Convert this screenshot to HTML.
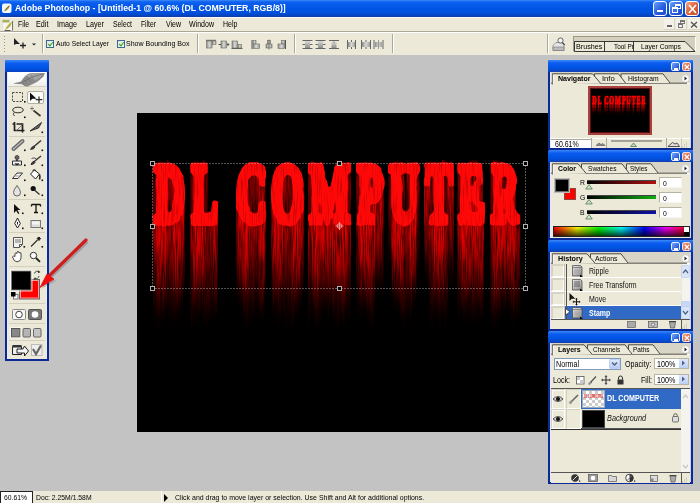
<!DOCTYPE html>
<html><head><meta charset="utf-8">
<style>
*{margin:0;padding:0;box-sizing:border-box}
html,body{width:700px;height:503px;overflow:hidden;background:#c3c3c3;font-family:"Liberation Sans",sans-serif;color:#000}
.a{position:absolute}
.s{position:absolute;white-space:nowrap;transform-origin:0 0;transform:scaleX(.82);font-size:8.5px;line-height:8.5px}
#title{left:0;top:0;width:700px;height:18px;background:linear-gradient(#4a94fa 0,#1a6cf2 1px,#0a5eee 3px,#0055e5 9px,#0050dc 13px,#0046c8 15px,#1a3ca0 17px,#f4f8ff 17px)}
.wb{top:1px;width:14px;height:15px;border:1px solid #fff;border-radius:3px;background:linear-gradient(135deg,#6aa0fa,#2a5ee0 55%,#1a48c8)}
.wb.c{background:linear-gradient(135deg,#f4a888,#dc6038 55%,#c44c24)}
#menu{left:0;top:18px;width:700px;height:13px;background:#ece9d8}
#opt{left:0;top:31px;width:700px;height:24px;background:#ece9d8;border-top:1px solid #aca899;box-shadow:inset 0 1px #fff}
.sep{position:absolute;width:2px;border-left:1px solid #aca899;border-right:1px solid #fff}
.cb{position:absolute;width:8px;height:8px;border:1px solid #3a6a90;background:linear-gradient(135deg,#e0e0d8,#fbfbf8)}
.cb:after{content:"";position:absolute;left:2px;top:0px;width:2px;height:4px;border-right:1.4px solid #20a020;border-bottom:1.4px solid #20a020;transform:rotate(40deg)}
#status{left:0;top:491px;width:700px;height:12px;background:#ece9d8}
#canvas{left:137px;top:113px;width:420px;height:319px;background:#000;overflow:hidden}
</style></head><body>
<!-- TITLE -->
<div id="title" class="a">
  <svg class="a" style="left:1px;top:3px" width="12" height="11"><rect x="1" y=".5" width="9.5" height="9.5" rx="2" fill="#f4f6fa"/><path d="M3 8.5C4 6 6 3.5 9 2C8.5 5 6.5 7.5 3 8.5z" fill="#a89838"/><path d="M4 7.5L8 3" stroke="#6a5a20" stroke-width=".7"/></svg>
  <div class="s" style="left:15px;top:4.4px;color:#fff;font-size:9px;line-height:9px;font-weight:bold;transform:scaleX(.97)">Adobe Photoshop - [Untitled-1 @ 60.6% (DL COMPUTER, RGB/8)]</div>
  <div class="wb a" style="left:653px"><div class="a" style="left:3px;top:8px;width:6px;height:2px;background:#fff"></div></div>
  <div class="wb a" style="left:669px"><div class="a" style="left:5px;top:2px;width:6px;height:5px;border:1px solid #fff;border-top-width:2px"></div><div class="a" style="left:2px;top:5px;width:6px;height:6px;border:1px solid #fff;border-top-width:2px;background:#3a6ae8"></div></div>
  <div class="wb a c" style="left:685px"><svg class="a" style="left:2px;top:2px" width="9" height="10"><path d="M1 1L8 9M8 1L1 9" stroke="#fff" stroke-width="1.6"/></svg></div>
</div>
<!-- MENU -->
<div id="menu" class="a">
  <svg class="a" style="left:2px;top:1px" width="12" height="12"><rect x=".5" y="1" width="10.5" height="10.5" fill="#f6f6f0" stroke="#d8d8d0" stroke-width=".5"/><rect x=".5" y="1" width="7" height="2.5" fill="#a8b060"/><path d="M3 11C4 8 6.5 4.5 10 2.5C9.5 6.5 7 9.5 3 11z" fill="#b8b048"/><path d="M10.5 2v9.5" stroke="#555" stroke-width=".8"/><path d="M2.5 11.5h6" stroke="#333" stroke-width=".8"/></svg>
  <div class="s" style="left:17.5px;top:2px;font-size:9px;line-height:9px;transform:scaleX(.76)">File</div>
  <div class="s" style="left:36px;top:2px;font-size:9px;line-height:9px;transform:scaleX(.8)">Edit</div>
  <div class="s" style="left:57px;top:2px;font-size:9px;line-height:9px;transform:scaleX(.8)">Image</div>
  <div class="s" style="left:85.5px;top:2px;font-size:9px;line-height:9px;transform:scaleX(.8)">Layer</div>
  <div class="s" style="left:112.5px;top:2px;font-size:9px;line-height:9px;transform:scaleX(.76)">Select</div>
  <div class="s" style="left:140.5px;top:2px;font-size:9px;line-height:9px;transform:scaleX(.75)">Filter</div>
  <div class="s" style="left:165.5px;top:2px;font-size:9px;line-height:9px;transform:scaleX(.78)">View</div>
  <div class="s" style="left:188.5px;top:2px;font-size:9px;line-height:9px;transform:scaleX(.78)">Window</div>
  <div class="s" style="left:222.5px;top:2px;font-size:9px;line-height:9px;transform:scaleX(.78)">Help</div>
  <div class="a" style="left:664px;top:1px;width:11px;height:11px;background:#f4f2e8;border-right:1px solid #d8d4c4;border-bottom:1px solid #d8d4c4"><div class="a" style="left:3px;top:6px;width:5px;height:2px;background:#666"></div></div>
  <div class="a" style="left:676px;top:1px;width:11px;height:11px;background:#f4f2e8;border-right:1px solid #d8d4c4;border-bottom:1px solid #d8d4c4"><div class="a" style="left:4px;top:1px;width:5px;height:4px;border:1px solid #777;border-top-width:2px"></div><div class="a" style="left:2px;top:4px;width:5px;height:5px;border:1px solid #777;border-top-width:2px;background:#f4f2e8"></div></div>
  <div class="a" style="left:688px;top:1px;width:12px;height:11px;background:#f4f2e8;border-bottom:1px solid #d8d4c4"><svg class="a" style="left:2px;top:2px" width="8" height="7"><path d="M1 1L7 6.5M7 1L1 6.5" stroke="#555" stroke-width="1.4"/></svg></div>
</div>
<!-- OPTIONS -->
<div id="opt" class="a">
  <div class="a" style="left:4px;top:4px;width:1px;height:17px;background:repeating-linear-gradient(#9c9888 0 1px,transparent 1px 3px)"></div>
  <svg class="a" style="left:13px;top:5px" width="26" height="12">
    <path d="M1 1L1 8L3 7L7 7Z" fill="#222"/>
    <path d="M10 5.5v6M7 8.5h6" stroke="#222" stroke-width="1.3"/>
    <path d="M19 6.5h4l-2 2z" fill="#222"/>
  </svg>
  <div class="sep" style="left:42px;top:2px;height:19px"></div>
  <div class="cb" style="left:46px;top:8px"></div>
  <div class="s" style="left:56px;top:8px;font-size:8px;line-height:8px;transform:scaleX(.84)">Auto Select Layer</div>
  <div class="cb" style="left:117px;top:8px"></div>
  <div class="s" style="left:126px;top:8px;font-size:8px;line-height:8px;transform:scaleX(.88)">Show Bounding Box</div>
  <div class="sep" style="left:197px;top:2px;height:19px"></div>
  <div class="sep" style="left:294px;top:2px;height:19px"></div>
  <div class="sep" style="left:392px;top:2px;height:19px"></div>
  <div class="sep" style="left:547px;top:2px;height:19px"></div>
  <svg class="a" style="left:0;top:-31px" width="700" height="60">
    <defs>
      <linearGradient id="gb" x1="0" y1="0" x2="1" y2="0"><stop offset="0" stop-color="#8c8c88"/><stop offset=".5" stop-color="#d8d8d4"/><stop offset="1" stop-color="#9c9c98"/></linearGradient>
      <linearGradient id="gv" x1="0" y1="0" x2="0" y2="1"><stop offset="0" stop-color="#d8d8d4"/><stop offset="1" stop-color="#8c8c88"/></linearGradient>
    </defs>
    <g stroke="#6a6a66" stroke-width=".6">
      <!-- group1 -->
      <rect x="206.5" y="40" width="5.5" height="7" fill="url(#gb)"/><rect x="212.5" y="40" width="3.5" height="3.5" fill="url(#gb)"/><path d="M206 39.3h10" stroke="#555" stroke-width=".9"/>
      <rect x="221" y="40" width="5.5" height="7" fill="url(#gb)"/><path d="M218.5 43.5h2.5M227 43.5h2" stroke="#555" stroke-width="1"/><path d="M227.5 42l1.8 1.5-1.8 1.5" fill="#555"/>
      <rect x="232" y="40" width="5.5" height="7" fill="url(#gb)"/><rect x="238" y="43.5" width="3.5" height="3.5" fill="url(#gb)"/><path d="M231.5 47.5h11" stroke="#555" stroke-width=".9"/>
      <!-- group2 -->
      <path d="M252 39v9" stroke="#555" stroke-width="1"/><rect x="253" y="39.5" width="3" height="3.5" fill="url(#gb)"/><rect x="253" y="43" width="6.5" height="4.5" fill="url(#gb)"/>
      <rect x="267.5" y="39.5" width="3" height="3" fill="url(#gb)"/><rect x="266" y="43" width="6" height="4" fill="url(#gb)"/><path d="M269 38.5v10" stroke="#555" stroke-width=".7"/>
      <path d="M285.5 39v9" stroke="#555" stroke-width="1"/><rect x="281.5" y="39.5" width="3" height="3.5" fill="url(#gb)"/><rect x="278" y="43" width="6.5" height="4.5" fill="url(#gb)"/>
      <!-- group3 -->
      <path d="M302.5 39.5h10M302.5 43.5h10M302.5 47.5h10" stroke="#666" stroke-width="1"/><rect x="305" y="40" width="5" height="7" fill="url(#gv)" stroke="none"/>
      <path d="M315.5 39.5h10M315.5 43.5h10M315.5 47.5h10" stroke="#666" stroke-width="1"/><rect x="318" y="40" width="5" height="7" fill="url(#gv)" stroke="none"/>
      <path d="M329 39.5h10M329 47.5h10" stroke="#666" stroke-width="1"/><rect x="331.5" y="41" width="5" height="6" fill="url(#gv)" stroke="none"/><path d="M334 39v3" stroke="#666"/>
      <!-- group4 -->
      <path d="M347.5 39v9M351.5 39v9M355.5 39v9" stroke="#666" stroke-width="1"/><rect x="348" y="41" width="7" height="5" fill="url(#gb)" stroke="none"/>
      <path d="M361.5 39v9M366 39v9M370.5 39v9" stroke="#666" stroke-width="1"/><rect x="362" y="41" width="8" height="5" fill="url(#gb)" stroke="none"/>
      <path d="M374 39v9M383 39v9" stroke="#666" stroke-width="1"/><rect x="375" y="41" width="7" height="5" fill="url(#gb)" stroke="none"/><path d="M378.5 39v9" stroke="#666"/>
      <!-- file browser -->
      <path d="M553 44.5l3-3h6l2 2.5v5.5h-11z" fill="#e4e4e4" stroke="#777" stroke-width=".7"/><path d="M553 46h11v3.5h-11z" fill="#bbb" stroke="#777" stroke-width=".6"/>
      <circle cx="560.5" cy="39.5" r="2.6" fill="#f4f4f4" stroke="#555" stroke-width=".9"/><path d="M562.3 41.5l2.5 2.5" stroke="#555" stroke-width="1.3"/>
    </g>
  </svg>
  <!-- palette well -->
  <div class="a" style="left:573px;top:4px;width:123px;height:16px;background:#d4d0c0;border:1px solid #888;border-top-color:#9c9888;border-left-color:#9c9888;border-right-color:#fff;border-bottom-color:#fff"></div>
  <svg class="a" style="left:573px;top:9px" width="124" height="12">
    <path d="M1.5 .5V10.5H122L112 .5z" fill="#ece9d8" stroke="#222" stroke-width=".9"/>
    <path d="M31.5 .5V10.5M60.5 .5V10.5" stroke="#222" stroke-width=".9"/>
  </svg>
  <div class="s" style="left:575.5px;top:10.5px;font-size:8px;line-height:8px;transform:scaleX(.9)">Brushes</div>
  <div class="s" style="left:613.5px;top:10.5px;font-size:8px;line-height:8px;transform:scaleX(.8)">Tool Pr</div>
  <div class="s" style="left:641px;top:10.5px;font-size:8px;line-height:8px;transform:scaleX(.84)">Layer Comps</div>
</div>
<div id="canvas" class="a">
<svg class="a" style="left:0;top:0" width="420" height="319">
  <defs>
    <filter id="smear" filterUnits="userSpaceOnUse" x="137" y="158" width="420" height="182" color-interpolation-filters="sRGB">
      <feTurbulence type="fractalNoise" baseFrequency="0.2 0.004" numOctaves="2" seed="3" result="n1"/>
      <feColorMatrix in="n1" type="matrix" values="0 0 0 0 0.5  1 0 0 0 0  0 0 0 0 0  0 0 0 0 1" result="map"/>
      <feGaussianBlur in="SourceGraphic" stdDeviation="0.6 3" result="sg"/>
      <feDisplacementMap in="sg" in2="map" scale="36" xChannelSelector="R" yChannelSelector="G" result="disp"/>
      <feTurbulence type="fractalNoise" baseFrequency="0.9 0.035" numOctaves="2" seed="9" result="n2"/>
      <feColorMatrix in="n2" type="matrix" values="0 0 0 0 0  0 0 0 0 0  0 0 0 0 0  1.7 0 0 0 -0.05" result="na"/>
      <feComposite in="disp" in2="na" operator="in"/>
    </filter>
    <clipPath id="below"><rect x="137" y="160" width="420" height="184"/></clipPath>
    <filter id="rough" x="-5%" y="-5%" width="110%" height="110%" color-interpolation-filters="sRGB">
      <feTurbulence type="fractalNoise" baseFrequency="0.5 0.06" numOctaves="1" seed="2" result="t"/>
      <feDisplacementMap in="SourceGraphic" in2="t" scale="3.5" xChannelSelector="R" yChannelSelector="G" result="d0"/>
      <feGaussianBlur in="d0" stdDeviation="1.3" result="d1"/>
      <feComponentTransfer in="d1" result="d"><feFuncA type="linear" slope="3.5" intercept="-1.1"/></feComponentTransfer>
      <feTurbulence type="fractalNoise" baseFrequency="0.9 0.04" numOctaves="2" seed="5" result="t2"/>
      <feColorMatrix in="t2" type="matrix" values="0 0 0 0 0  0 0 0 0 0  0 0 0 0 0  1.5 0 0 0 -0.78" result="dk"/>
      <feFlood flood-color="#600000" flood-opacity=".8" result="fl"/>
      <feComposite in="fl" in2="dk" operator="in" result="fl2"/>
      <feComposite in="fl2" in2="d" operator="in" result="fl3"/>
      <feMerge><feMergeNode in="d"/><feMergeNode in="fl3"/></feMerge>
    </filter>
    <g id="txt" font-family="Liberation Serif" font-weight="bold" font-size="100">
      <text transform="translate(154.56 221.1) scale(0.4185 0.8185)" vector-effect="non-scaling-stroke">D</text>
      <text transform="translate(191.63 221.1) scale(0.3867 0.8185)" vector-effect="non-scaling-stroke">L</text>
      <text transform="translate(236.30 221.1) scale(0.4200 0.8185)" vector-effect="non-scaling-stroke">C</text>
      <text transform="translate(271.29 221.1) scale(0.4221 0.8185)" vector-effect="non-scaling-stroke">O</text>
      <text transform="translate(309.54 221.1) scale(0.4292 0.8185)" vector-effect="non-scaling-stroke">M</text>
      <text transform="translate(357.57 221.1) scale(0.4143 0.8185)" vector-effect="non-scaling-stroke">P</text>
      <text transform="translate(389.60 221.1) scale(0.4000 0.8185)" vector-effect="non-scaling-stroke">U</text>
      <text transform="translate(425.60 221.1) scale(0.4000 0.8185)" vector-effect="non-scaling-stroke">T</text>
      <text transform="translate(458.64 221.1) scale(0.3783 0.8185)" vector-effect="non-scaling-stroke">E</text>
      <text transform="translate(491.68 221.1) scale(0.3620 0.8185)" vector-effect="non-scaling-stroke">R</text>
    </g>
  </defs>
  <g transform="translate(-137 -113)">
    <g clip-path="url(#below)"><g filter="url(#smear)"><g fill="#f00000" stroke="#f00000" stroke-width="6.8"><use href="#txt" y="5" opacity="0.328"/><use href="#txt" y="10" opacity="0.307"/><use href="#txt" y="15" opacity="0.286"/><use href="#txt" y="20" opacity="0.266"/><use href="#txt" y="25" opacity="0.246"/><use href="#txt" y="30" opacity="0.226"/><use href="#txt" y="35" opacity="0.207"/><use href="#txt" y="40" opacity="0.188"/><use href="#txt" y="45" opacity="0.169"/><use href="#txt" y="50" opacity="0.151"/><use href="#txt" y="55" opacity="0.133"/><use href="#txt" y="60" opacity="0.116"/><use href="#txt" y="65" opacity="0.100"/><use href="#txt" y="70" opacity="0.084"/><use href="#txt" y="75" opacity="0.069"/><use href="#txt" y="80" opacity="0.054"/><use href="#txt" y="85" opacity="0.041"/><use href="#txt" y="90" opacity="0.028"/><use href="#txt" y="95" opacity="0.016"/><use href="#txt" y="100" opacity="0.007"/></g></g></g>
    <g filter="url(#rough)" fill="#ff0808" stroke="#ff0808" stroke-width="6.8"><use href="#txt"/></g>
    <g fill="none" stroke="#b8b8b8" stroke-width=".9" stroke-dasharray="1 2">
      <rect x="152.5" y="163.5" width="373" height="125"/>
    </g>
    <g fill="#000" stroke="#b0b0b0" stroke-width="1">
      <rect x="150.5" y="161.5" width="4" height="4"/><rect x="337.5" y="161.5" width="4" height="4"/><rect x="523.5" y="161.5" width="4" height="4"/>
      <rect x="150.5" y="224.5" width="4" height="4"/><rect x="523.5" y="224.5" width="4" height="4"/>
      <rect x="150.5" y="286.5" width="4" height="4"/><rect x="337.5" y="286.5" width="4" height="4"/><rect x="523.5" y="286.5" width="4" height="4"/>
    </g>
    <g stroke="#f4b0b0" fill="none" stroke-width=".8"><circle cx="339.5" cy="226" r="2.3"/><path d="M335.5 226h8M339.5 222v8"/></g>
  </g>
</svg>
</div>
<!-- PANELS -->
<div class="a" style="left:548px;top:60px;width:145px;height:90px;background:#0b2a96;border-radius:2px 2px 0 0"></div>
<div class="a" style="left:548px;top:60px;width:145px;height:12px;background:linear-gradient(#3c8af6,#0c5cf0 25%,#0054e4 60%,#0848c8 90%,#1a3ca8);border-radius:2px 2px 0 0"></div>
<div class="a" style="left:550px;top:72px;width:141px;height:76px;background:#ece9d8;border-left:1px solid #e4eaf8;border-right:1px solid #c8d4f0"></div>
<div class="a" style="left:671px;top:62px;width:9px;height:9px;border:1px solid #e8f0ff;border-radius:2px;background:linear-gradient(135deg,#78a8f8,#3868e0 60%,#2452c8)"><div class="a" style="left:2px;top:5px;width:4px;height:1.5px;background:#fff"></div></div>
<div class="a" style="left:682px;top:62px;width:9px;height:9px;border:1px solid #f4e0d8;border-radius:2px;background:linear-gradient(135deg,#f0a888,#d86a48 60%,#c45838)"><svg class="a" style="left:1px;top:1px" width="6" height="6"><path d="M.8 .8L5.2 5.2M5.2 .8L.8 5.2" stroke="#fff" stroke-width="1.3"/></svg></div>
<div class="a" style="left:551px;top:72px;width:139px;height:11.5px;background:#d8d5c6;border-bottom:1px solid #fff"></div>
<svg class="a" style="left:681px;top:73.5px" width="9" height="9"><circle cx="4.5" cy="4.5" r="3.8" fill="#fbfbf8" stroke="#c8c8c0" stroke-width=".6"/><path d="M3.5 2.5L6 4.5L3.5 6.5z" fill="#223"/></svg>
<svg class="a" style="left:548px;top:72px;overflow:visible" width="145" height="13">
<path d="M3 11.2H139" stroke="#4c4a40" stroke-width="1"/>
<path d="M73.0 11V1.8H115L122 11" fill="#ece9d8" stroke="#3c3c34" stroke-width=".9"/>
<path d="M46.5 11V1.8H70.5L77.5 11" fill="#ece9d8" stroke="#3c3c34" stroke-width=".9"/>
<path d="M4.5 12.5V1.8H44.5L52.5 11.2" fill="#ece9d8" stroke="#3c3c34" stroke-width=".9"/>
<path d="M5 11.5H52.0V13H5z" fill="#ece9d8"/>
<path d="M5.2 2.5V12.5" stroke="#fff" stroke-width=".8"/>
</svg>
<div class="s" style="left:557.5px;top:74.8px;font-size:8px;line-height:8px;transform:scaleX(0.88);color:#000;font-weight:bold;">Navigator</div>
<div class="s" style="left:602px;top:74.8px;font-size:8px;line-height:8px;transform:scaleX(0.95);color:#000;">Info</div>
<div class="s" style="left:628px;top:74.8px;font-size:8px;line-height:8px;transform:scaleX(0.84);color:#000;">Histogram</div>
<div class="a" style="left:588px;top:86px;width:64px;height:48.5px;background:#000;border:2px solid #a8403c;box-shadow:inset 0 0 0 1px #5a1010"></div>
<svg class="a" style="left:590px;top:88px" width="60" height="45"><g transform="translate(-20.46 -16.5) scale(.1458)"><g clip-path="url(#below)"><g fill="#e00" stroke="#e00" stroke-width=".5"><use href="#txt" y="10" opacity="0.422"/><use href="#txt" y="20" opacity="0.347"/><use href="#txt" y="30" opacity="0.278"/><use href="#txt" y="40" opacity="0.213"/><use href="#txt" y="50" opacity="0.154"/><use href="#txt" y="60" opacity="0.102"/><use href="#txt" y="70" opacity="0.056"/><use href="#txt" y="80" opacity="0.021"/></g></g><g fill="#f00" stroke="#f00" stroke-width=".5"><use href="#txt"/></g></g></svg>
<div class="a" style="left:551px;top:138px;width:139px;height:10px;background:#ece9d8;border-top:1px solid #fff"></div>
<div class="a" style="left:551px;top:138.5px;width:40px;height:9.5px;background:#fff;border-top:1px solid #aca899"></div>
<div class="s" style="left:555px;top:139.6px;font-size:8.5px;line-height:8.5px;transform:scaleX(0.82);color:#000;">60.61%</div>
<div class="a" style="left:591px;top:138px;width:1px;height:10px;background:#aca899"></div>
<div class="a" style="left:606px;top:138px;width:1px;height:10px;background:#aca899"></div>
<div class="a" style="left:666px;top:138px;width:1px;height:10px;background:#aca899"></div>
<div class="a" style="left:681px;top:138px;width:1px;height:10px;background:#d0ccbc"></div>
<svg class="a" style="left:594px;top:139px" width="96" height="9"><path d="M2 6.5l3-2.5 2 1.5 2-1 2 2z" fill="#888" stroke="#555" stroke-width=".6"/><path d="M17 2h51" stroke="#8c8c80" stroke-width="1.4"/><path d="M39.5 4l-3 3.5h6z" fill="#b8dcb0" stroke="#5a7a5a" stroke-width=".8"/><path d="M74 7.5l4.5-4 2.5 1.5 2-1 2.5 3.5z" fill="#ddd" stroke="#444" stroke-width=".9"/><path d="M88 8h1M90 6h1M90 8h1M92 4h1M92 6h1M92 8h1" stroke="#b8b4a4"/></svg>
<div class="a" style="left:548px;top:150px;width:145px;height:90px;background:#0b2a96;border-radius:2px 2px 0 0"></div>
<div class="a" style="left:548px;top:150px;width:145px;height:12px;background:linear-gradient(#3c8af6,#0c5cf0 25%,#0054e4 60%,#0848c8 90%,#1a3ca8);border-radius:2px 2px 0 0"></div>
<div class="a" style="left:550px;top:162px;width:141px;height:76px;background:#ece9d8;border-left:1px solid #e4eaf8;border-right:1px solid #c8d4f0"></div>
<div class="a" style="left:671px;top:152px;width:9px;height:9px;border:1px solid #e8f0ff;border-radius:2px;background:linear-gradient(135deg,#78a8f8,#3868e0 60%,#2452c8)"><div class="a" style="left:2px;top:5px;width:4px;height:1.5px;background:#fff"></div></div>
<div class="a" style="left:682px;top:152px;width:9px;height:9px;border:1px solid #f4e0d8;border-radius:2px;background:linear-gradient(135deg,#f0a888,#d86a48 60%,#c45838)"><svg class="a" style="left:1px;top:1px" width="6" height="6"><path d="M.8 .8L5.2 5.2M5.2 .8L.8 5.2" stroke="#fff" stroke-width="1.3"/></svg></div>
<div class="a" style="left:551px;top:162px;width:139px;height:11.5px;background:#d8d5c6;border-bottom:1px solid #fff"></div>
<svg class="a" style="left:681px;top:163.5px" width="9" height="9"><circle cx="4.5" cy="4.5" r="3.8" fill="#fbfbf8" stroke="#c8c8c0" stroke-width=".6"/><path d="M3.5 2.5L6 4.5L3.5 6.5z" fill="#223"/></svg>
<svg class="a" style="left:548px;top:162px;overflow:visible" width="145" height="13">
<path d="M3 11.2H139" stroke="#4c4a40" stroke-width="1"/>
<path d="M78.5 11V1.8H103L110 11" fill="#ece9d8" stroke="#3c3c34" stroke-width=".9"/>
<path d="M33.5 11V1.8H74L81 11" fill="#ece9d8" stroke="#3c3c34" stroke-width=".9"/>
<path d="M4.5 12.5V1.8H30L38 11.2" fill="#ece9d8" stroke="#3c3c34" stroke-width=".9"/>
<path d="M5 11.5H37.5V13H5z" fill="#ece9d8"/>
<path d="M5.2 2.5V12.5" stroke="#fff" stroke-width=".8"/>
</svg>
<div class="s" style="left:557.5px;top:164.8px;font-size:8px;line-height:8px;transform:scaleX(0.86);color:#000;font-weight:bold;">Color</div>
<div class="s" style="left:587.5px;top:164.8px;font-size:8px;line-height:8px;transform:scaleX(0.82);color:#000;">Swatches</div>
<div class="s" style="left:629.5px;top:164.8px;font-size:8px;line-height:8px;transform:scaleX(0.8);color:#000;">Styles</div>
<div class="a" style="left:555px;top:179px;width:13.5px;height:13px;background:#000;border:1px solid #777;box-shadow:0 0 0 1px #999"></div>
<div class="a" style="left:564px;top:187.5px;width:12px;height:12px;background:#f00;border:1px solid #8a4a40"></div>
<div class="a" style="left:555px;top:179px;width:13.5px;height:13px;background:#000;border:1px solid #6a6a6a;box-shadow:0 0 0 1px #bbb"></div>
<div class="s" style="left:579.5px;top:179px;font-size:7.6px;line-height:7.6px;transform:scaleX(0.9);color:#000;">R</div>
<div class="a" style="left:587px;top:180px;width:69px;height:4px;background:linear-gradient(90deg,#000,#b01010);border-top:1px solid #444"></div>
<svg class="a" style="left:585px;top:184px" width="8" height="6"><path d="M4 .5L7.3 5H.7z" fill="#c8e4c0" stroke="#587858" stroke-width=".8"/></svg>
<div class="a" style="left:659px;top:177px;width:22.5px;height:10.5px;background:#fff;border:1px solid #b8b4a4;border-right-color:#f4f4f0;border-bottom-color:#f4f4f0"></div>
<div class="s" style="left:662.5px;top:180px;font-size:8px;line-height:8px;transform:scaleX(0.85);color:#000;">0</div>
<div class="s" style="left:579.5px;top:194px;font-size:7.6px;line-height:7.6px;transform:scaleX(0.9);color:#000;">G</div>
<div class="a" style="left:587px;top:195px;width:69px;height:4px;background:linear-gradient(90deg,#000,#10b010);border-top:1px solid #444"></div>
<svg class="a" style="left:585px;top:199px" width="8" height="6"><path d="M4 .5L7.3 5H.7z" fill="#c8e4c0" stroke="#587858" stroke-width=".8"/></svg>
<div class="a" style="left:659px;top:192px;width:22.5px;height:10.5px;background:#fff;border:1px solid #b8b4a4;border-right-color:#f4f4f0;border-bottom-color:#f4f4f0"></div>
<div class="s" style="left:662.5px;top:195px;font-size:8px;line-height:8px;transform:scaleX(0.85);color:#000;">0</div>
<div class="s" style="left:579.5px;top:209px;font-size:7.6px;line-height:7.6px;transform:scaleX(0.9);color:#000;">B</div>
<div class="a" style="left:587px;top:210px;width:69px;height:4px;background:linear-gradient(90deg,#000,#1010a8);border-top:1px solid #444"></div>
<svg class="a" style="left:585px;top:214px" width="8" height="6"><path d="M4 .5L7.3 5H.7z" fill="#c8e4c0" stroke="#587858" stroke-width=".8"/></svg>
<div class="a" style="left:659px;top:207px;width:22.5px;height:10.5px;background:#fff;border:1px solid #b8b4a4;border-right-color:#f4f4f0;border-bottom-color:#f4f4f0"></div>
<div class="s" style="left:662.5px;top:210px;font-size:8px;line-height:8px;transform:scaleX(0.85);color:#000;">0</div>
<div class="a" style="left:553px;top:225.5px;width:137px;height:11.5px;background:linear-gradient(90deg,#ff0000 0%,#ffff00 17%,#00ff00 33%,#00ffff 50%,#0000ff 67%,#ff00ff 83%,#ff0000 100%);border:1px solid #222"></div>
<div class="a" style="left:553px;top:225.5px;width:137px;height:11.5px;background:linear-gradient(rgba(255,255,255,0),rgba(0,0,0,.75));border:1px solid #222"></div>
<div class="a" style="left:683.5px;top:226.5px;width:5.5px;height:5px;background:#fff"></div>
<div class="a" style="left:683.5px;top:231.5px;width:5.5px;height:4.5px;background:#000"></div>
<div class="a" style="left:548px;top:240px;width:145px;height:91px;background:#0b2a96;border-radius:2px 2px 0 0"></div>
<div class="a" style="left:548px;top:240px;width:145px;height:12px;background:linear-gradient(#3c8af6,#0c5cf0 25%,#0054e4 60%,#0848c8 90%,#1a3ca8);border-radius:2px 2px 0 0"></div>
<div class="a" style="left:550px;top:252px;width:141px;height:77px;background:#ece9d8;border-left:1px solid #e4eaf8;border-right:1px solid #c8d4f0"></div>
<div class="a" style="left:671px;top:242px;width:9px;height:9px;border:1px solid #e8f0ff;border-radius:2px;background:linear-gradient(135deg,#78a8f8,#3868e0 60%,#2452c8)"><div class="a" style="left:2px;top:5px;width:4px;height:1.5px;background:#fff"></div></div>
<div class="a" style="left:682px;top:242px;width:9px;height:9px;border:1px solid #f4e0d8;border-radius:2px;background:linear-gradient(135deg,#f0a888,#d86a48 60%,#c45838)"><svg class="a" style="left:1px;top:1px" width="6" height="6"><path d="M.8 .8L5.2 5.2M5.2 .8L.8 5.2" stroke="#fff" stroke-width="1.3"/></svg></div>
<div class="a" style="left:551px;top:252px;width:139px;height:11.5px;background:#d8d5c6;border-bottom:1px solid #fff"></div>
<svg class="a" style="left:681px;top:253.5px" width="9" height="9"><circle cx="4.5" cy="4.5" r="3.8" fill="#fbfbf8" stroke="#c8c8c0" stroke-width=".6"/><path d="M3.5 2.5L6 4.5L3.5 6.5z" fill="#223"/></svg>
<svg class="a" style="left:548px;top:252px;overflow:visible" width="145" height="13">
<path d="M3 11.2H139" stroke="#4c4a40" stroke-width="1"/>
<path d="M42.5 11V1.8H73L80 11" fill="#ece9d8" stroke="#3c3c34" stroke-width=".9"/>
<path d="M4.5 12.5V1.8H39L47 11.2" fill="#ece9d8" stroke="#3c3c34" stroke-width=".9"/>
<path d="M5 11.5H46.5V13H5z" fill="#ece9d8"/>
<path d="M5.2 2.5V12.5" stroke="#fff" stroke-width=".8"/>
</svg>
<div class="s" style="left:557.5px;top:254.8px;font-size:8px;line-height:8px;transform:scaleX(0.9);color:#000;font-weight:bold;">History</div>
<div class="s" style="left:594.5px;top:254.8px;font-size:8px;line-height:8px;transform:scaleX(0.86);color:#000;">Actions</div>
<div class="a" style="left:551px;top:264px;width:130px;height:55px;background:#ece9d8"></div>
<div class="a" style="left:551px;top:264px;width:14px;height:14px;background:#ece9d8;border-right:1px solid #c8c4b4;border-bottom:1px solid #fff;box-shadow:inset 1px 1px #d8d4c4"></div>
<div class="a" style="left:552px;top:265px;width:12px;height:12px;border:1px solid #d6d2c2;border-right-color:#fbfbf8;border-bottom-color:#fbfbf8"></div>
<div class="a" style="left:565px;top:277px;width:116px;height:1px;background:#fff"></div>
<div class="s" style="left:588.5px;top:266.5px;font-size:8.5px;line-height:8.5px;transform:scaleX(0.82);color:#111;">Ripple</div>
<div class="a" style="left:551px;top:278px;width:14px;height:14px;background:#ece9d8;border-right:1px solid #c8c4b4;border-bottom:1px solid #fff;box-shadow:inset 1px 1px #d8d4c4"></div>
<div class="a" style="left:552px;top:279px;width:12px;height:12px;border:1px solid #d6d2c2;border-right-color:#fbfbf8;border-bottom-color:#fbfbf8"></div>
<div class="a" style="left:565px;top:291px;width:116px;height:1px;background:#fff"></div>
<div class="s" style="left:588.5px;top:280.5px;font-size:8.5px;line-height:8.5px;transform:scaleX(0.82);color:#111;">Free Transform</div>
<div class="a" style="left:551px;top:292px;width:14px;height:14px;background:#ece9d8;border-right:1px solid #c8c4b4;border-bottom:1px solid #fff;box-shadow:inset 1px 1px #d8d4c4"></div>
<div class="a" style="left:552px;top:293px;width:12px;height:12px;border:1px solid #d6d2c2;border-right-color:#fbfbf8;border-bottom-color:#fbfbf8"></div>
<div class="a" style="left:565px;top:305px;width:116px;height:1px;background:#fff"></div>
<div class="s" style="left:588.5px;top:294.5px;font-size:8.5px;line-height:8.5px;transform:scaleX(0.82);color:#111;">Move</div>
<div class="a" style="left:551px;top:306px;width:14px;height:14px;background:#ece9d8;border-right:1px solid #c8c4b4;border-bottom:1px solid #fff;box-shadow:inset 1px 1px #d8d4c4"></div>
<div class="a" style="left:552px;top:307px;width:12px;height:12px;border:1px solid #d6d2c2;border-right-color:#fbfbf8;border-bottom-color:#fbfbf8"></div>
<div class="a" style="left:565px;top:306px;width:116px;height:13.5px;background:#316ac5"></div>
<div class="s" style="left:588.5px;top:308.5px;font-size:8.5px;line-height:8.5px;transform:scaleX(0.82);color:#fff;font-weight:bold;">Stamp</div>
<div class="a" style="left:565.5px;top:264px;width:1px;height:55px;background:#555"></div>
<svg class="a" style="left:548px;top:264px" width="40" height="56">
<defs><linearGradient id="hg" x1="0" y1="0" x2="1" y2="1"><stop offset="0" stop-color="#e8e8e8"/><stop offset="1" stop-color="#8a8a8a"/></linearGradient></defs>
<g stroke="#444" stroke-width=".7">
<path d="M24.5 1.5h8l1.5 1.5v9h-9.5z" fill="url(#hg)"/><path d="M24.5 3.5h9.5" stroke="#666"/><path d="M26 6h6M26 8h6" stroke="#999"/>
<path d="M24.5 15.5h8l1.5 1.5v9h-9.5z" fill="url(#hg)"/><path d="M26 18h6M26 20h6M26 22h6" stroke="#555" stroke-width=".9"/>
<path d="M24.5 43.5h8l1.5 1.5v9h-9.5z" fill="url(#hg)"/><path d="M24.5 45.5h9.5" stroke="#666"/><path d="M26 48h6M26 50h6" stroke="#999"/>
</g>
<path d="M32 10.5l3 2.5h-3z M32 24.5l3 2.5h-3z M32 52.5l3 2.5h-3z" fill="#000"/>
<path d="M21.5 29v8l2.2-2.2h3.6z" fill="#111"/><path d="M28.5 34.5v6.5M25.2 37.8h6.6" stroke="#111" stroke-width="1"/><path d="M27.6 35.3l.9-1.2.9 1.2M27.6 40.2l.9 1.2.9-1.2M26 36.9l-1.2.9 1.2.9M31 36.9l1.2.9-1.2.9" stroke="#111" stroke-width=".7" fill="none"/>
<path d="M17.5 44.5l4.5 3.3-4.5 3.3z" fill="#fff" stroke="#333" stroke-width=".8"/>
</svg>
<div class="a" style="left:681px;top:264px;width:9px;height:55px;background:#f4f3ee;border-left:1px solid #e8e8e0"></div>
<svg class="a" style="left:681px;top:265px" width="9" height="54"><rect x=".5" y=".5" width="8" height="12" rx="1" fill="#d8e4f8" stroke="#b8c8e8" stroke-width=".6"/><path d="M2 8l2.5-3 2.5 3" stroke="#4d6185" stroke-width="1.2" fill="none"/><rect x=".5" y="36.5" width="8" height="5" rx="1" fill="#c8d8f4" stroke="#b0c4ec" stroke-width=".6"/><rect x=".5" y="41.5" width="8" height="12" rx="1" fill="#d8e4f8" stroke="#b8c8e8" stroke-width=".6"/><path d="M2 46l2.5 3 2.5-3" stroke="#4d6185" stroke-width="1.2" fill="none"/></svg>
<div class="a" style="left:551px;top:319px;width:139px;height:10px;background:#ece9d8;border-top:1px solid #555"></div>
<svg class="a" style="left:620px;top:320px" width="70" height="9"><rect x="7.5" y="1.5" width="8" height="6" fill="#aaa" stroke="#666" stroke-width=".7"/><rect x="28.5" y="1.5" width="9" height="6" fill="#bbb" stroke="#555" stroke-width=".7"/><circle cx="33" cy="4.5" r="1.6" fill="#eee" stroke="#444" stroke-width=".6"/><path d="M49.5 2h6l-1 6h-4z" fill="#aaa" stroke="#555" stroke-width=".7"/><path d="M49 1.5h7" stroke="#444"/><path d="M62 8h1M64 6h1M64 8h1M66 4h1M66 6h1M66 8h1" stroke="#b8b4a4"/></svg>
<div class="a" style="left:548px;top:331px;width:145px;height:153px;background:#0b2a96;border-radius:2px 2px 0 0"></div>
<div class="a" style="left:548px;top:331px;width:145px;height:12px;background:linear-gradient(#3c8af6,#0c5cf0 25%,#0054e4 60%,#0848c8 90%,#1a3ca8);border-radius:2px 2px 0 0"></div>
<div class="a" style="left:550px;top:343px;width:141px;height:139px;background:#ece9d8;border-left:1px solid #e4eaf8;border-right:1px solid #c8d4f0"></div>
<div class="a" style="left:671px;top:333px;width:9px;height:9px;border:1px solid #e8f0ff;border-radius:2px;background:linear-gradient(135deg,#78a8f8,#3868e0 60%,#2452c8)"><div class="a" style="left:2px;top:5px;width:4px;height:1.5px;background:#fff"></div></div>
<div class="a" style="left:682px;top:333px;width:9px;height:9px;border:1px solid #f4e0d8;border-radius:2px;background:linear-gradient(135deg,#f0a888,#d86a48 60%,#c45838)"><svg class="a" style="left:1px;top:1px" width="6" height="6"><path d="M.8 .8L5.2 5.2M5.2 .8L.8 5.2" stroke="#fff" stroke-width="1.3"/></svg></div>
<div class="a" style="left:551px;top:343px;width:139px;height:11.5px;background:#d8d5c6;border-bottom:1px solid #fff"></div>
<svg class="a" style="left:681px;top:344.5px" width="9" height="9"><circle cx="4.5" cy="4.5" r="3.8" fill="#fbfbf8" stroke="#c8c8c0" stroke-width=".6"/><path d="M3.5 2.5L6 4.5L3.5 6.5z" fill="#223"/></svg>
<svg class="a" style="left:548px;top:343px;overflow:visible" width="145" height="13">
<path d="M3 11.2H139" stroke="#4c4a40" stroke-width="1"/>
<path d="M80.5 11V1.8H105L112 11" fill="#ece9d8" stroke="#3c3c34" stroke-width=".9"/>
<path d="M39.5 11V1.8H77L84 11" fill="#ece9d8" stroke="#3c3c34" stroke-width=".9"/>
<path d="M4.5 12.5V1.8H36L44 11.2" fill="#ece9d8" stroke="#3c3c34" stroke-width=".9"/>
<path d="M5 11.5H43.5V13H5z" fill="#ece9d8"/>
<path d="M5.2 2.5V12.5" stroke="#fff" stroke-width=".8"/>
</svg>
<div class="s" style="left:557.5px;top:345.8px;font-size:8px;line-height:8px;transform:scaleX(0.88);color:#000;font-weight:bold;">Layers</div>
<div class="s" style="left:592.5px;top:345.8px;font-size:8px;line-height:8px;transform:scaleX(0.805);color:#000;">Channels</div>
<div class="s" style="left:633px;top:345.8px;font-size:8px;line-height:8px;transform:scaleX(0.81);color:#000;">Paths</div>
<div class="a" style="left:553.5px;top:358px;width:67px;height:11.5px;background:#fff;border:1px solid #7f9db9"></div>
<div class="s" style="left:556px;top:359.6px;font-size:8.5px;line-height:8.5px;transform:scaleX(0.84);color:#000;">Normal</div>
<div class="a" style="left:609px;top:359px;width:10.5px;height:9.5px;background:linear-gradient(#dfe8fc,#b8ccf4);border:1px solid #c0d0f4;border-radius:1px"></div>
<svg class="a" style="left:611px;top:361px" width="7" height="6"><path d="M1 1.5l2.5 2.5 2.5-2.5" stroke="#4d6185" stroke-width="1.5" fill="none"/></svg>
<div class="s" style="left:625px;top:359.5px;font-size:8.5px;line-height:8.5px;transform:scaleX(0.84);color:#000;">Opacity:</div>
<div class="a" style="left:654px;top:357.5px;width:34.5px;height:11px;background:#fff;border:1px solid #b8b4a4"></div>
<div class="s" style="left:657px;top:359.5px;font-size:8.5px;line-height:8.5px;transform:scaleX(0.84);color:#000;">100%</div>
<div class="a" style="left:678.5px;top:358.5px;width:9px;height:9px;background:linear-gradient(#dfe8fc,#bcd0f4)"></div>
<svg class="a" style="left:681px;top:360px" width="5" height="6"><path d="M1 .5L4 3 1 5.5z" fill="#4d6185"/></svg>
<div class="s" style="left:553px;top:376.2px;font-size:8.5px;line-height:8.5px;transform:scaleX(0.84);color:#000;">Lock:</div>
<svg class="a" style="left:574px;top:374px" width="54" height="12">
<rect x="2.5" y="2.5" width="7.5" height="7.5" fill="#fff" stroke="#555" stroke-width=".8"/><path d="M3 3h3v3H3zM6 6h3.5v3.5H6z" fill="#ccc"/>
<path d="M15 10l7-7.5M16 10q0-2 2-2" stroke="#555" stroke-width="1.3" fill="none"/><path d="M14.5 10.5l2.5-2" stroke="#999" stroke-width="2"/>
<path d="M32 2v8M28 6h8" stroke="#333" stroke-width="1.1"/><path d="M31 3l1-1.5 1 1.5M31 9l1 1.5 1-1.5M29 5l-1.5 1 1.5 1M35 5l1.5 1-1.5 1" stroke="#333" stroke-width=".8" fill="none"/>
<rect x="43.5" y="5.5" width="6" height="5" fill="#333"/><path d="M44.5 5.5v-1.5a2 2 0 014 0v1.5" stroke="#333" stroke-width="1" fill="none"/>
</svg>
<div class="s" style="left:640.5px;top:376.2px;font-size:8.5px;line-height:8.5px;transform:scaleX(0.84);color:#000;">Fill:</div>
<div class="a" style="left:654px;top:374px;width:34.5px;height:10.5px;background:#fff;border:1px solid #b8b4a4"></div>
<div class="s" style="left:657px;top:375.7px;font-size:8.5px;line-height:8.5px;transform:scaleX(0.84);color:#000;">100%</div>
<div class="a" style="left:678.5px;top:375px;width:9px;height:8.5px;background:linear-gradient(#dfe8fc,#bcd0f4)"></div>
<svg class="a" style="left:681px;top:376px" width="5" height="6"><path d="M1 .5L4 3 1 5.5z" fill="#4d6185"/></svg>
<div class="a" style="left:551px;top:388px;width:139px;height:1px;background:#555"></div>
<div class="a" style="left:551px;top:389px;width:130px;height:83px;background:#ece9d8"></div>
<div class="a" style="left:551px;top:389px;width:14px;height:20px;border:1px solid #d4d0c0;border-right-color:#fff;border-bottom-color:#fff;box-shadow:inset 1px 1px #f8f8f4"></div>
<div class="a" style="left:566px;top:389px;width:15px;height:20px;border:1px solid #d4d0c0;border-right-color:#fff;border-bottom-color:#fff"></div>
<svg class="a" style="left:552px;top:395px" width="12" height="8"><path d="M1 4q5-5 10 0q-5 5-10 0z" fill="#ccc" stroke="#333" stroke-width=".8"/><circle cx="6" cy="4" r="2" fill="#111"/></svg>
<div class="a" style="left:551px;top:409px;width:14px;height:20px;border:1px solid #d4d0c0;border-right-color:#fff;border-bottom-color:#fff;box-shadow:inset 1px 1px #f8f8f4"></div>
<div class="a" style="left:566px;top:409px;width:15px;height:20px;border:1px solid #d4d0c0;border-right-color:#fff;border-bottom-color:#fff"></div>
<svg class="a" style="left:552px;top:415px" width="12" height="8"><path d="M1 4q5-5 10 0q-5 5-10 0z" fill="#ccc" stroke="#333" stroke-width=".8"/><circle cx="6" cy="4" r="2" fill="#111"/></svg>
<div class="a" style="left:581px;top:389px;width:100px;height:19.5px;background:#316ac5"></div>
<div class="a" style="left:582px;top:390px;width:22.5px;height:17.5px;background:repeating-conic-gradient(#fff 0 25%,#ccc 0 50%) 0 0/6px 6px;border:1px solid #9ab"></div>
<svg class="a" style="left:583px;top:393px" width="21" height="6"><text x="1" y="5" font-family="Liberation Serif" font-weight="bold" font-size="6" fill="#e02020" textLength="19" lengthAdjust="spacingAndGlyphs">DL COMPUTER</text></svg>
<svg class="a" style="left:567px;top:392px" width="14" height="14"><path d="M3 11l8-8" stroke="#666" stroke-width="1.6"/><path d="M2.5 11.5l2-2" stroke="#999" stroke-width="2.5"/></svg>
<div class="s" style="left:606.5px;top:393.5px;font-size:8.5px;line-height:8.5px;transform:scaleX(0.84);color:#fff;font-weight:bold;">DL COMPUTER</div>
<div class="a" style="left:581px;top:428px;width:100px;height:1px;background:#555"></div>
<div class="a" style="left:581.5px;top:409.5px;width:23px;height:18.5px;background:#000;border:1px solid #444"></div>
<div class="s" style="left:606.5px;top:413.5px;font-size:8.5px;line-height:8.5px;transform:scaleX(0.86);color:#111;"><i>Background</i></div>
<svg class="a" style="left:671px;top:412px" width="9" height="11"><rect x="1.5" y="4.5" width="6" height="5.5" rx="1" fill="#ddd" stroke="#555" stroke-width=".8"/><path d="M2.8 4.5v-1.2a1.7 1.7 0 013.4 0v1.2" stroke="#555" stroke-width=".9" fill="none"/></svg>
<div class="a" style="left:551px;top:429px;width:130px;height:1px;background:#333"></div>
<div class="a" style="left:681px;top:389px;width:9px;height:83px;background:#f4f3ee"></div>
<svg class="a" style="left:681px;top:390px" width="9" height="82"><path d="M2 8l2.5-3 2.5 3" stroke="#c8c8c0" stroke-width="1.2" fill="none"/><path d="M2 75l2.5 3 2.5-3" stroke="#c8c8c0" stroke-width="1.2" fill="none"/></svg>
<div class="a" style="left:551px;top:472px;width:139px;height:10.5px;background:#ece9d8;border-top:1px solid #555"></div>
<svg class="a" style="left:570px;top:473px" width="120" height="10">
<circle cx="5" cy="5" r="3.8" fill="#333"/><path d="M2.5 7.5l5-5" stroke="#ddd" stroke-width="1"/><rect x="9" y="7.5" width="1.2" height="1.2" fill="#111"/>
<rect x="18.5" y="1.5" width="9" height="7" fill="#999" stroke="#555" stroke-width=".7"/><circle cx="23" cy="5" r="2.3" fill="#fff"/>
<path d="M38.5 2.5h3l1 1h4v5h-8z" fill="#d8d8d8" stroke="#555" stroke-width=".7"/>
<circle cx="59.5" cy="5" r="3.8" fill="#fff" stroke="#333" stroke-width=".9"/><path d="M59.5 1.2a3.8 3.8 0 010 7.6z" fill="#333"/><path d="M57 7.5l5-5" stroke="#777"/><rect x="64" y="7.5" width="1.2" height="1.2" fill="#111"/>
<rect x="80.5" y="2.5" width="7" height="6" fill="#ddd" stroke="#555" stroke-width=".7"/><rect x="80.5" y="5.5" width="3" height="3" fill="#888"/>
<path d="M100 3h6l-1 6h-4z" fill="#aaa" stroke="#555" stroke-width=".7"/><path d="M99.5 2.5h7" stroke="#444"/>
<path d="M112 9h1M114 7h1M114 9h1M116 5h1M116 7h1M116 9h1" stroke="#b8b4a4"/>
</svg>
<div class="a" style="left:681px;top:473px;width:1px;height:10px;background:#5a5a50"></div>
<div class="a" style="left:681px;top:320px;width:1px;height:9px;background:#5a5a50"></div>
<!-- /PANELS -->
<!-- TOOLBOX -->
<div class="a" id="tb" style="left:5px;top:60px;width:44px;height:301px;background:#0c2a94;border-radius:2px 2px 0 0"></div>
<div class="a" style="left:5px;top:60px;width:44px;height:12px;background:linear-gradient(#3a88f6,#0a5cf0 30%,#0052e2 70%,#0840c0);border-radius:2px 2px 0 0"></div>
<div class="a" style="left:7px;top:72px;width:40px;height:287px;background:#ece9d8;border-left:1px solid #e6ecf8;border-right:1px solid #e6ecf8"></div>
<div class="a" style="left:8px;top:72px;width:38px;height:15px;background:linear-gradient(#fff,#f8f8f6 60%,#ecebe6)"></div>
<div class="a" style="left:27px;top:91px;width:17px;height:13px;background:#fbfbf8;border:1px solid #b4b0a0;border-radius:2px"></div>
<svg class="a" style="left:0;top:0;overflow:visible" width="60" height="370">
  <g fill="#d4d0c0"><rect x="8" y="86" width="38" height="1"/><rect x="9" y="136" width="36" height="1"/><rect x="9" y="199" width="36" height="1"/><rect x="9" y="232" width="36" height="1"/><rect x="9" y="266" width="36" height="1"/><rect x="9" y="303" width="36" height="1"/><rect x="9" y="323" width="36" height="1"/><rect x="9" y="340" width="36" height="1"/></g>
  <!-- feather -->
  <path d="M14 83.2L21 81.5C23 78 26 74.5 30 73.2L45 73L43.5 76.5C41 79 38 81.5 34 83.5L27 86.8L24.5 86L22 84.2L14 83.8z" fill="#8a8a8a"/>
  <path d="M26 75.5C29 74 33 73.6 38 73.6L44 73.5C42 76 39 78.5 35 80.5z" fill="#a4a4a4"/>
  <path d="M22 83C27 79 33 76 43 74" stroke="#6a6a6a" stroke-width=".8" fill="none"/>
  <path d="M24 80l4 4M27 77l4 5M31 75l3 5M22 82l3 3.5" stroke="#707070" stroke-width=".6"/>
  <g fill="#111">
    <rect x="24" y="101" width="1.6" height="1.6"/>
    <rect x="24" y="116.5" width="1.6" height="1.6"/><rect x="41.5" y="131.5" width="1.6" height="1.6"/>
    <rect x="24" y="149.5" width="1.6" height="1.6"/><rect x="41.5" y="149.5" width="1.6" height="1.6"/>
    <rect x="24" y="164.5" width="1.6" height="1.6"/><rect x="41.5" y="164.5" width="1.6" height="1.6"/>
    <rect x="24" y="179.5" width="1.6" height="1.6"/><rect x="41.5" y="179.5" width="1.6" height="1.6"/>
    <rect x="24" y="194.5" width="1.6" height="1.6"/><rect x="41.5" y="194.5" width="1.6" height="1.6"/>
    <rect x="22" y="212.5" width="1.6" height="1.6"/><rect x="41.5" y="212.5" width="1.6" height="1.6"/>
    <rect x="22" y="227.5" width="1.6" height="1.6"/><rect x="41.5" y="227.5" width="1.6" height="1.6"/>
    <rect x="23.5" y="246" width="1.6" height="1.6"/><rect x="41.5" y="246" width="1.6" height="1.6"/>
  </g>
  <g fill="none" stroke="#2a2a2a" stroke-width="1">
    <rect x="12.5" y="92.5" width="10" height="9" stroke-dasharray="2 1.3" stroke="#444"/>
    <path d="M30 92.5v8.5l2.3-2.2h4.2z" fill="#111" stroke="none"/>
    <path d="M39 96.5v6.5M35.7 99.7h6.6" stroke-width="1.2"/>
    <ellipse cx="18" cy="110" rx="5.3" ry="2.8" stroke="#333"/><path d="M14 112.5q-1.5 2 .5 3.5" stroke="#333"/>
    <path d="M33.5 110.5l7 5.5" stroke-width="1.6" stroke="#333"/><path d="M32 106.5v4M30 108.5h4" stroke-width=".8" stroke="#666"/>
    <path d="M14.5 122v8.5h8.5M16.5 124h6v8.5M12.5 124h2M23 130.5h1.5" stroke-width="1.7" stroke="#222"/><path d="M16.5 130.5l6-6" stroke="#777"/>
    <path d="M30 131l11.5-8.5-3 5.5z" fill="#666" stroke="#222" stroke-width=".9"/>
    <path d="M13.5 149l9-8" stroke="#666" stroke-width="4" stroke-linecap="round"/><path d="M13.5 149l9-8" stroke="#bbb" stroke-width="1.6" stroke-linecap="round" stroke-dasharray="1.5 1.5"/>
    <path d="M34 146.5l7-6" stroke="#333" stroke-width="1.5"/><path d="M30.5 149.5q1-3 3.5-3.5l1 1q-1 2.5-4.5 2.5z" fill="#444" stroke="#222" stroke-width=".8"/>
    <circle cx="17" cy="157.5" r="2" fill="#666" stroke="#333" stroke-width=".8"/><path d="M16 159.5h2v1.5h-2z" fill="#333" stroke="none"/>
    <path d="M12.5 161h9v4h-9z" fill="#eee" stroke="#333"/><path d="M15 163.5l2 1.5 2-1.5" fill="#111" stroke="#111" stroke-width=".8"/>
    <path d="M33 162.5l8-6.5" stroke="#333" stroke-width="1.3"/><path d="M31 164.5q1-3 3-3l1 1q-1 2-4 2z" fill="#444"/><path d="M31.5 158.5q3-1.5 5 .5" stroke="#555"/>
    <path d="M12.5 178.5l4.5-5.5h5.5l-4.5 5.5z" fill="#fafafa" stroke="#333"/><path d="M14.5 176h5.5" stroke="#999"/>
    <path d="M30.5 174l4-4 5 4-4 5z" fill="#fff" stroke="#222"/><path d="M36 170.5q-2-1.5-3.5 0" stroke="#222"/><path d="M39.5 174.5q1 3 0 5" stroke="#222" stroke-width="1.6"/>
    <path d="M17 185.5q-3.5 4.5-3.5 7a3.5 3.5 0 007 0q0-2.5-3.5-7z" fill="#e4e4e4" stroke="#555" stroke-width=".9"/>
    <circle cx="33.2" cy="188.5" r="2.6" fill="#111" stroke="none"/><path d="M34.5 190l5 4.5" stroke="#333" stroke-width="1.3"/>
    <path d="M14 204v9l2.2-2.3 2 3.3 1.2-.7-2-3.3h3z" fill="#111" stroke="none"/>
    <path d="M31.5 204.5h9M36 204.5v8M34 212.5h4M31.5 204.5v2M40.5 204.5v2" stroke="#111" stroke-width="1.3"/>
    <path d="M17.5 218l2.8 5.5-2.8 4.5-2.8-4.5z" fill="#fafafa" stroke="#222"/><path d="M17.5 222v2.5" stroke="#222"/>
    <rect x="31" y="220.5" width="9.5" height="7" fill="#ddd" stroke="#777"/><rect x="32" y="221.5" width="7.5" height="3" fill="#f4f4f4" stroke="none"/>
    <path d="M13.5 237.5h9v7l-3 3h-6z" fill="#f2f2ee" stroke="#555"/><path d="M15 240h6M15 242h6" stroke="#777" stroke-width="1.2"/><path d="M19.5 247.5v-3h3" stroke="#555"/>
    <path d="M31 246.5l6.5-6.5" stroke="#333" stroke-width="1.3"/><path d="M37 238.5l2-1.5 1.5 1.5-1.5 2z" fill="#222" stroke="#222"/>
    <path d="M12.5 257q1-2 2.5-.5v-3q1-1.5 2 0v-1.5q1-1 2 0v1q1-1 2 0v5q0 3.5-4 3.8-3 .2-4.5-4.8z" fill="#fff" stroke="#333" stroke-width=".9"/>
    <circle cx="33.5" cy="255.5" r="3.2" fill="#fafafa" stroke="#333"/><path d="M36 258l4 3.8" stroke="#222" stroke-width="1.8"/>
  </g>
  <!-- swatches -->
  <rect x="19.5" y="279.5" width="20" height="19.5" fill="#f00" stroke="#666"/>
  <rect x="20.5" y="280.5" width="18" height="17.5" fill="none" stroke="#fff" stroke-opacity=".6"/>
  <rect x="11.5" y="271" width="19.5" height="19" fill="#000" stroke="#777"/>
  <rect x="10.5" y="270" width="21.5" height="21" fill="none" stroke="#fff" stroke-opacity=".8"/>
  <path d="M34.5 273.5a3 3 0 015-1.5M39 276a3 3 0 01-4 2.5" stroke="#333" fill="none" stroke-width=".9"/>
  <path d="M38 270.5l2.5 1.5-2.5 1.2z M35.5 279.5l-2-1 2-1.2z" fill="#333"/>
  <rect x="13.5" y="294.5" width="4.5" height="4.5" fill="#fff" stroke="#777"/>
  <rect x="11" y="292" width="4.5" height="4.5" fill="#000"/>
  <!-- quick mask -->
  <rect x="12.5" y="309.5" width="13" height="10" rx="1" fill="#f6f6f4" stroke="#8a8a8a"/>
  <circle cx="19" cy="314.5" r="3.3" fill="#fff" stroke="#444"/>
  <rect x="28.5" y="309.5" width="13" height="10" rx="1" fill="#777" stroke="#555"/>
  <circle cx="35" cy="314.5" r="3.3" fill="#fff"/>
  <!-- screen modes -->
  <rect x="11.5" y="328.5" width="8.5" height="8.5" fill="#888" stroke="#555"/>
  <rect x="10.5" y="327.5" width="10.5" height="10.5" fill="none" stroke="#fff" stroke-opacity=".7"/>
  <rect x="23" y="328.5" width="7.5" height="8.5" rx="1" fill="#b4b4b4" stroke="#666"/>
  <rect x="33.5" y="328.5" width="7.5" height="8.5" rx="1" fill="#c4c4c4" stroke="#666"/>
  <!-- jump -->
  <path d="M12.5 346.5h9v8h-9z" fill="#f0f0f0" stroke="#222"/><path d="M12.5 345h9v2.5h-9z" fill="#333"/>
  <path d="M17 349h6l1.5-3 4 5-4 5v-3H17z" fill="#f6f6f6" stroke="#222"/>
  <rect x="31.5" y="344.5" width="10.5" height="11" fill="#eee" stroke="#bbb"/>
  <path d="M33 349l3 5 5-8.5" stroke="#666" stroke-width="2.2" fill="none"/>
</svg>
<!-- ARROW -->
<svg class="a" style="left:0;top:0" width="100" height="300">
  <path d="M87.5 241.5L50 277.5" stroke="#000" stroke-opacity=".18" stroke-width="3.5"/>
  <path d="M41.5 289L48.5 276L56 281z" fill="#000" fill-opacity=".15"/>
  <path d="M86 240L49 276" stroke="#d01c1c" stroke-width="3.2" stroke-linecap="round"/>
  <path d="M40 287.5L46.8 274.2L54 279z" fill="#f40c0c" stroke="#e01010" stroke-width=".8" stroke-linejoin="round"/>
</svg>
<!-- STATUS -->
<div id="status" class="a">
  <div class="a" style="left:0;top:0;width:33px;height:12px;background:#fff;border:1px solid #222;border-bottom:none"></div>
  <div class="s" style="left:4px;top:3px;font-size:8px;line-height:8px;transform:scaleX(.85)">60.61%</div>
  <div class="s" style="left:36px;top:3px;font-size:8px;line-height:8px;transform:scaleX(.85)">Doc: 2.25M/1.58M</div>
  <div class="a" style="left:161px;top:0;width:1px;height:12px;background:#fff"></div>
  <svg class="a" style="left:163px;top:3px" width="6" height="8"><path d="M1 0L5 4L1 8Z" fill="#000"/></svg>
  <div class="s" style="left:175px;top:3px;font-size:8px;line-height:8px;transform:scaleX(.87)">Click and drag to move layer or selection.  Use Shift and Alt for additional options.</div>
</div>
</body></html>
